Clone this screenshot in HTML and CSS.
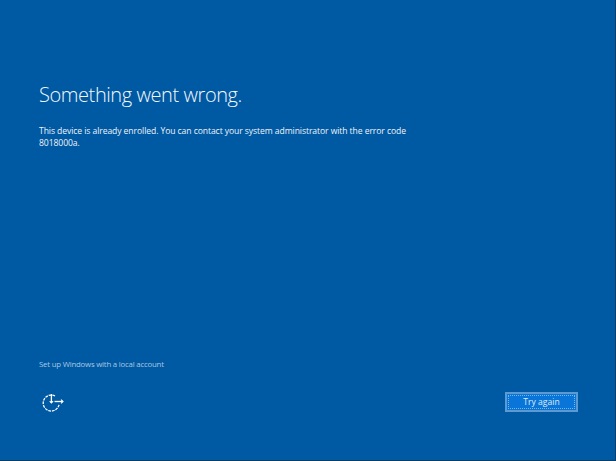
FILE: index.html
```html
<!DOCTYPE html>
<html lang="en">
<head>
<meta charset="utf-8">
<title>Something went wrong</title>
<link rel="stylesheet" href="styles.css">
</head>
<body>
<main class="screen">
  <section class="message">
    <h1 class="title">Something went wrong.</h1>
    <p class="detail">This device is already enrolled. You can contact your system administrator with the error code 8018000a.</p>
  </section>
  <a class="local-link" href="#">Set up Windows with a local account</a>
  <footer class="footer">
    <svg class="ease-icon" width="22" height="22" viewBox="0 0 22 22" fill="none" stroke="#fff" stroke-width="1.3" aria-hidden="true">
      <path d="M13 5A8 8 0 1 0 17 13.8" stroke-dasharray="2.8 0.9"/>
      <path d="M9.4 3V12"/>
      <path d="M7.7 10.2L9.4 12L11.1 10.2" stroke-width="1.1"/>
      <path d="M12.5 10.5H21"/>
      <path d="M19 8.6L21 10.5L19 12.4" stroke-width="1.1"/>
    </svg>
    <button class="try-button" type="button"><span class="try-label">Try again</span></button>
  </footer>
</main>
</body>
</html>
```
FILE: styles.css
```css
html, body {
  margin: 0;
  padding: 0;
  height: 100%;
  background: #0b3e66;
}
.screen {
  box-sizing: border-box;
  width: 615px;
  height: 460px;
  background: #0059a3;
  color: #fff;
  font-family: "Open Sans", "Liberation Sans", sans-serif;
  padding: 81px 37px 47px 39px;
  display: flex;
  flex-direction: column;
}
.message { flex: 1; }
.title {
  margin: 0;
  font-size: 20px;
  line-height: 28px;
  font-weight: 300;
  letter-spacing: -0.42px;
  color: #f4f8fb;
}
.detail {
  margin: 15.5px 0 0;
  width: 376px;
  font-size: 8.6px;
  line-height: 12px;
  font-weight: 400;
  letter-spacing: -0.085px;
  color: #eef3f8;
}
.local-link {
  font-size: 7.8px;
  line-height: 12px;
  letter-spacing: -0.2px;
  color: #a9c8e2;
  text-decoration: none;
}
.footer {
  margin-top: 21px;
  display: flex;
  justify-content: space-between;
  align-items: center;
}
.ease-icon { margin-left: 3px; }
.try-button {
  box-sizing: border-box;
  width: 73px;
  height: 20px;
  padding: 1px;
  background: #0a75d8;
  border: 2px solid #5b9ad2;
  color: #dfebf7;
  font: 400 8.6px/12px "Open Sans", "Liberation Sans", sans-serif;
}
.try-label {
  display: flex;
  align-items: center;
  justify-content: center;
  height: 100%;
  border: 1px dotted #7fb4e4;
  box-sizing: border-box;
}
```
